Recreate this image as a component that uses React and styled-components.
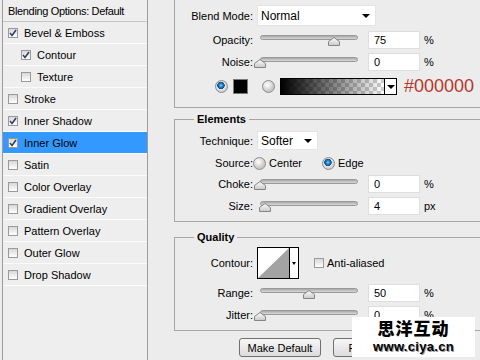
import React from "react";
import styled, { createGlobalStyle } from "styled-components";

const GlobalStyle = createGlobalStyle`
  html, body {
    margin: 0;
    padding: 0;
    background: #ececec;
    overflow: hidden;
  }
  body {
    font-family: "Liberation Sans", Arial, sans-serif;
    font-size: 11px;
    color: #000;
  }
`;

const styles = [
  { name: "Bevel & Emboss", checked: true },
  { name: "Contour", checked: true, indent: true },
  { name: "Texture", indent: true },
  { name: "Stroke" },
  { name: "Inner Shadow", checked: true },
  { name: "Inner Glow", checked: true, active: true },
  { name: "Satin" },
  { name: "Color Overlay" },
  { name: "Gradient Overlay" },
  { name: "Pattern Overlay" },
  { name: "Outer Glow" },
  { name: "Drop Shadow" },
];

const Check = ({ checked }) => (
  <CheckBox>
    {checked && (
      <svg width="8" height="8" viewBox="0 0 8 8">
        <path d="M1 4 L3 6.5 L7 1" fill="none" stroke="#2f3b66" strokeWidth="1.5" />
      </svg>
    )}
  </CheckBox>
);

const Slider = ({ value }) => (
  <SliderWrap>
    <Track />
    <Thumb style={{ left: `${3 + value * 98 - 6}px` }}>
      <svg width="12" height="9" viewBox="0 0 12 9">
        <defs>
          <linearGradient id="tg" x1="0" y1="0" x2="0" y2="1">
            <stop offset="0" stopColor="#ffffff" />
            <stop offset="1" stopColor="#c8c8c8" />
          </linearGradient>
        </defs>
        <polygon
          points="0.5,8.5 0.5,4.5 6,0.5 11.5,4.5 11.5,8.5"
          fill="url(#tg)"
          stroke="#858585"
        />
      </svg>
    </Thumb>
  </SliderWrap>
);

const SliderRow = ({ label, value, text, unit, mt }) => (
  <Row $mt={mt} $h={18}>
    <Label>{label}</Label>
    <Slider value={value} />
    <NumberBox>{text}</NumberBox>
    <Unit>{unit}</Unit>
  </Row>
);

const App = () => (
  <Page>
    <GlobalStyle />
    <StylePanel>
      <PanelHeader>Blending Options: Default</PanelHeader>
      {styles.map((s) => (
        <StyleRow key={s.name} $indent={s.indent} $active={s.active}>
          <Check checked={s.checked} />
          <span>{s.name}</span>
        </StyleRow>
      ))}
    </StylePanel>

    <Settings>
      <TopGroup>
        <Row $mt={5} $h={21}>
          <Label>Blend Mode:</Label>
          <Select $w={119}>
            Normal
            <Arrow />
          </Select>
        </Row>
        <SliderRow label="Opacity:" value={0.75} text="75" unit="%" mt={5} />
        <SliderRow label="Noise:" value={0} text="0" unit="%" mt={4} />
        <Row $mt={7} $h={17}>
          <Radio $checked $ml={40} />
          <Swatch />
          <Radio $ml={14} />
          <GradientBar>
            <GradientFill />
            <GradientArrow>
              <Arrow />
            </GradientArrow>
          </GradientBar>
          <HexText>#000000</HexText>
        </Row>
      </TopGroup>

      <Group $mt={4}>
        <Legend>Elements</Legend>
        <Row $mt={5} $h={19}>
          <Label>Technique:</Label>
          <Select $w={61}>
            Softer
            <Arrow />
          </Select>
        </Row>
        <Row $mt={6} $h={14}>
          <Label $mr={0}>Source:</Label>
          <Radio />
          <RadioText>Center</RadioText>
          <Radio $checked $ml={20} />
          <RadioText>Edge</RadioText>
        </Row>
        <SliderRow label="Choke:" value={0} text="0" unit="%" mt={5} />
        <SliderRow label="Size:" value={0.05} text="4" unit="px" mt={4} />
        <GroupEnd $h={6} />
      </Group>

      <Group $mt={8}>
        <Legend>Quality</Legend>
        <Row $mt={3} $h={32}>
          <Label>Contour:</Label>
          <ContourPicker>
            <svg width="31" height="30" viewBox="0 0 31 30">
              <rect width="31" height="30" fill="#fff" />
              <polygon points="0,30 31,0 31,30" fill="#a3a3a3" />
            </svg>
            <ContourArrow>
              <SmallArrow />
            </ContourArrow>
          </ContourPicker>
          <CheckSpacer>
            <Check />
          </CheckSpacer>
          <RadioText>Anti-aliased</RadioText>
        </Row>
        <SliderRow label="Range:" value={0.5} text="50" unit="%" mt={5} />
        <SliderRow label="Jitter:" value={0} text="0" unit="%" mt={4} />
        <GroupEnd $h={6} />
      </Group>

      <ButtonBar>
        <Button $w={82}>Make Default</Button>
        <Button $w={110}>Reset to Default</Button>
      </ButtonBar>
    </Settings>

    <Watermark>
      <WatermarkTitle>思洋互动</WatermarkTitle>
      <WatermarkUrl>www.ciya.cn</WatermarkUrl>
    </Watermark>
  </Page>
);

export default App;

const Page = styled.div`
  display: flex;
  width: 480px;
  height: 360px;
  overflow: hidden;
  position: relative;
`;

const StylePanel = styled.div`
  width: 144px;
  flex-shrink: 0;
  margin-left: 2px;
  border-left: 1px solid #9c9c9c;
  border-right: 1px solid #9c9c9c;
  background: #eeeeee;
`;

const PanelHeader = styled.div`
  height: 21px;
  display: flex;
  align-items: center;
  padding-left: 5px;
  letter-spacing: -0.35px;
  border-bottom: 1px solid #c6c6c6;
`;

const StyleRow = styled.div`
  height: 21px;
  display: flex;
  align-items: center;
  gap: 6px;
  padding-left: ${({ $indent }) => ($indent ? 18 : 5)}px;
  border-bottom: 1px solid #fbfbfb;
  background: ${({ $active }) => ($active ? "#3399ff" : "transparent")};
`;

const CheckBox = styled.div`
  width: 10px;
  height: 10px;
  box-sizing: border-box;
  border: 1px solid #9a9a9a;
  background: linear-gradient(#d8d8d8, #ffffff);
  display: flex;
  align-items: center;
  justify-content: center;
  flex-shrink: 0;
`;

const Settings = styled.div`
  padding-left: 26px;
  width: 340px;
  flex-shrink: 0;
`;

const TopGroup = styled.div`
  height: 108px;
  box-sizing: border-box;
  border-left: 1px solid #a6a6a6;
  border-bottom: 1px solid #a6a6a6;
  overflow: hidden;
`;

const Group = styled.fieldset`
  margin: ${({ $mt }) => $mt}px 0 0 0;
  padding: 0;
  min-width: 0;
  border: 1px solid #a6a6a6;
`;

const Legend = styled.legend`
  margin-left: 19px;
  padding: 0 3px;
  font-weight: bold;
  font-size: 11px;
  line-height: 14px;
`;

const GroupEnd = styled.div`
  height: ${({ $h }) => $h}px;
`;

const Row = styled.div`
  display: flex;
  align-items: center;
  height: ${({ $h }) => $h}px;
  margin-top: ${({ $mt }) => $mt}px;
`;

const Label = styled.div`
  width: 78px;
  margin-right: ${({ $mr = 4 }) => $mr}px;
  text-align: right;
  flex-shrink: 0;
`;

const Select = styled.div`
  width: ${({ $w }) => $w}px;
  height: 100%;
  box-sizing: border-box;
  background: #fff;
  border: 1px solid #e4e4e4;
  padding: 0 5px 0 3px;
  display: flex;
  align-items: center;
  justify-content: space-between;
  font-size: 12px;
`;

const Arrow = styled.span`
  width: 0;
  height: 0;
  border-left: 4px solid transparent;
  border-right: 4px solid transparent;
  border-top: 4px solid #000;
`;

const SmallArrow = styled(Arrow)`
  border-left-width: 2px;
  border-right-width: 2px;
  border-top-width: 3px;
`;

const SliderWrap = styled.div`
  position: relative;
  width: 104px;
  height: 18px;
  margin-right: 7px;
  flex-shrink: 0;
`;

const Track = styled.div`
  margin: 4px 0 0 3px;
  width: 98px;
  height: 5px;
  box-sizing: border-box;
  border: 1px solid #999;
  border-radius: 3px;
  background: linear-gradient(#a8a8a8, #dadada);
`;

const Thumb = styled.div`
  position: absolute;
  top: 6px;
  width: 12px;
  height: 9px;
  line-height: 0;
`;

const NumberBox = styled.div`
  width: 52px;
  height: 18px;
  box-sizing: border-box;
  background: #fff;
  border: 1px solid #dedede;
  padding-left: 5px;
  display: flex;
  align-items: center;
`;

const Unit = styled.span`
  margin-left: 4px;
`;

const Radio = styled.div`
  width: 13px;
  height: 13px;
  box-sizing: border-box;
  flex-shrink: 0;
  margin-left: ${({ $ml = 0 }) => $ml}px;
  border-radius: 50%;
  border: 1px solid #8c8c8c;
  background: ${({ $checked }) =>
    $checked
      ? "radial-gradient(circle at 45% 40%, #7fd0ff 0, #1f78c0 2px, #0d4f8a 3.5px, #e8e8e8 4px, #cfcfcf 6px)"
      : "radial-gradient(circle at 40% 35%, #ffffff 0, #e6e6e6 3px, #c8c8c8 6px)"};
`;

const RadioText = styled.span`
  margin-left: 3px;
`;

const Swatch = styled.div`
  width: 15px;
  height: 15px;
  box-sizing: border-box;
  margin-left: 5px;
  background: #000;
  border: 1px solid #7a7a7a;
`;

const GradientBar = styled.div`
  width: 117px;
  height: 17px;
  box-sizing: border-box;
  margin-left: 5px;
  border: 1px solid #000;
  display: flex;
`;

const GradientFill = styled.div`
  flex: 1;
  background-image: linear-gradient(to right, #000, rgba(0, 0, 0, 0)),
    conic-gradient(#cfcfcf 25%, #ffffff 0 50%, #cfcfcf 0 75%, #ffffff 0);
  background-size: 100% 100%, 8px 8px;
`;

const GradientArrow = styled.div`
  width: 11px;
  border-left: 1px solid #000;
  background: #fff;
  display: flex;
  align-items: center;
  justify-content: center;
`;

const HexText = styled.span`
  margin-left: 7px;
  font-size: 18px;
  color: #b5372b;
`;

const ContourPicker = styled.div`
  height: 32px;
  box-sizing: border-box;
  border: 1px solid #000;
  display: flex;
  background: #fff;
`;

const ContourArrow = styled.div`
  width: 8px;
  border-left: 1px solid #000;
  display: flex;
  align-items: center;
  justify-content: center;
`;

const CheckSpacer = styled.div`
  margin-left: 15px;
  display: flex;
`;

const ButtonBar = styled.div`
  display: flex;
  gap: 12px;
  margin-top: 7px;
  padding-left: 65px;
`;

const Button = styled.div`
  width: ${({ $w }) => $w}px;
  height: 19px;
  box-sizing: border-box;
  border: 1px solid #707070;
  border-radius: 3px;
  background: linear-gradient(#f7f7f7, #dcdcdc);
  display: flex;
  align-items: center;
  justify-content: center;
`;

const Watermark = styled.div`
  position: absolute;
  left: 352px;
  top: 317px;
  width: 123px;
  height: 40px;
  background: #fff;
  display: flex;
  flex-direction: column;
  align-items: center;
`;

const WatermarkTitle = styled.div`
  font-family: "Noto Sans CJK SC", sans-serif;
  font-weight: 900;
  font-size: 17px;
  letter-spacing: 1px;
  line-height: 22px;
`;

const WatermarkUrl = styled.div`
  font-family: "Liberation Sans", Arial, sans-serif;
  font-weight: bold;
  font-size: 13px;
  line-height: 15px;
  letter-spacing: 0.3px;
  text-shadow: 1px 1px 0 #9a9a9a;
`;
